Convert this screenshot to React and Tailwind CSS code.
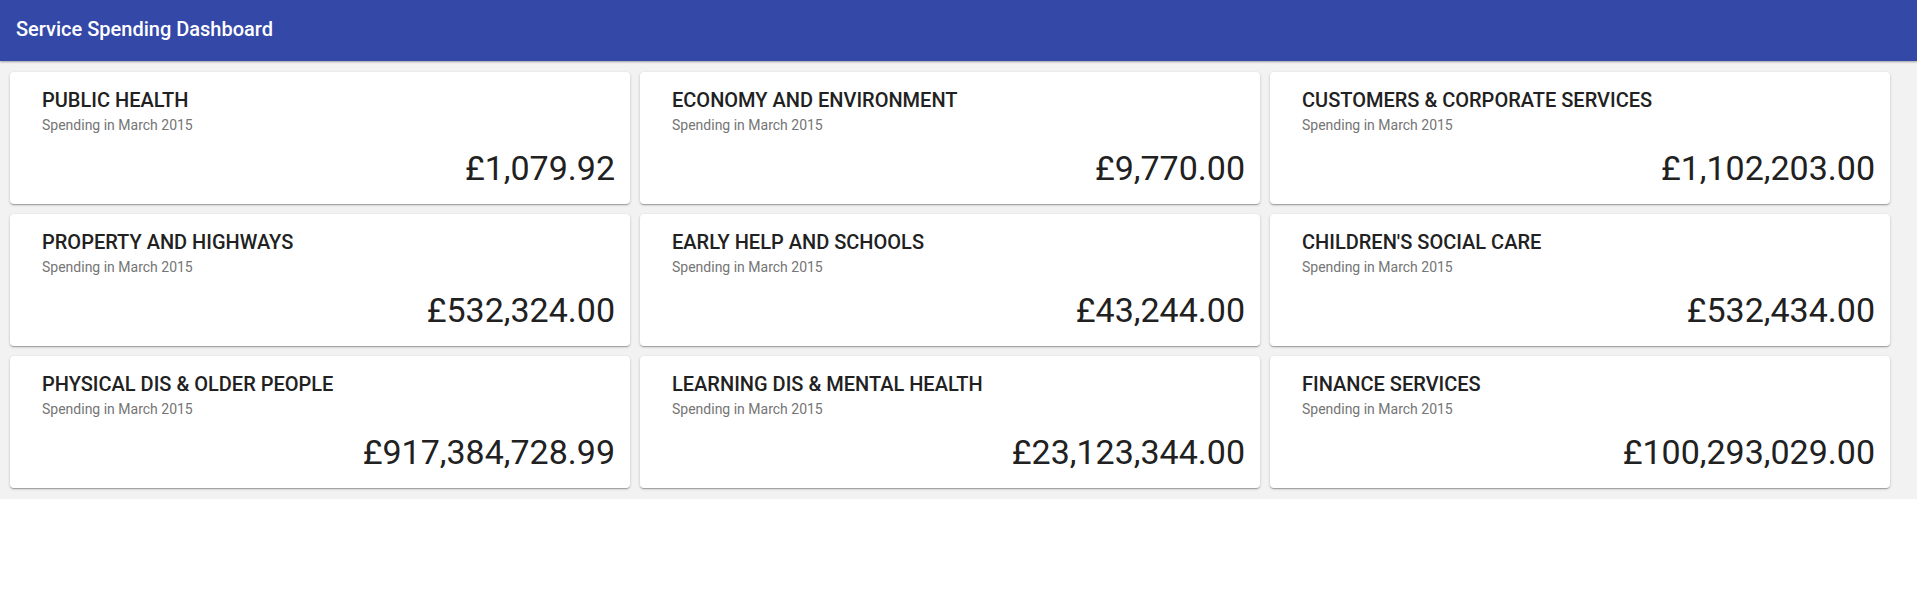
import React from "react";

const items = [
  ["PUBLIC HEALTH", "£1,079.92"],
  ["ECONOMY AND ENVIRONMENT", "£9,770.00"],
  ["CUSTOMERS & CORPORATE SERVICES", "£1,102,203.00"],
  ["PROPERTY AND HIGHWAYS", "£532,324.00"],
  ["EARLY HELP AND SCHOOLS", "£43,244.00"],
  ["CHILDREN'S SOCIAL CARE", "£532,434.00"],
  ["PHYSICAL DIS & OLDER PEOPLE", "£917,384,728.99"],
  ["LEARNING DIS & MENTAL HEALTH", "£23,123,344.00"],
  ["FINANCE SERVICES", "£100,293,029.00"],
];

function Card({ title, amount }) {
  return (
    <div className="bg-white rounded-[4px] shadow-[0_1px_3px_rgba(0,0,0,0.2),0_1px_1px_rgba(0,0,0,0.14),0_2px_1px_-1px_rgba(0,0,0,0.12)] pt-4 pb-4 pl-[32px] pr-[15px] flex flex-col">
      <div className="text-[20px] leading-6 font-medium text-[#212121]">{title}</div>
      <div className="mt-[3px] text-[14px] leading-5 text-[#757575]">Spending in March 2015</div>
      <div className="mt-[13px] text-[34px] leading-10 text-right text-[#212121]">{amount}</div>
    </div>
  );
}

export default function App() {
  return (
    <div className="min-h-[615px] bg-white font-['Roboto',_'Noto_Sans',_sans-serif]">
      <header className="relative z-10 h-[61px] bg-[#3448a8] px-4 pt-[17px] shadow-[0_1px_2px_rgba(0,0,0,0.35)]">
        <h1 className="text-[20px] leading-6 font-medium text-white">Service Spending Dashboard</h1>
      </header>
      <main className="bg-[#f2f2f2] pl-[10px] pr-[27px] py-[11px]">
        <div className="grid grid-cols-3 gap-[10px]">
          {items.map(([t, a]) => (
            <Card key={t} title={t} amount={a} />
          ))}
        </div>
      </main>
    </div>
  );
}
